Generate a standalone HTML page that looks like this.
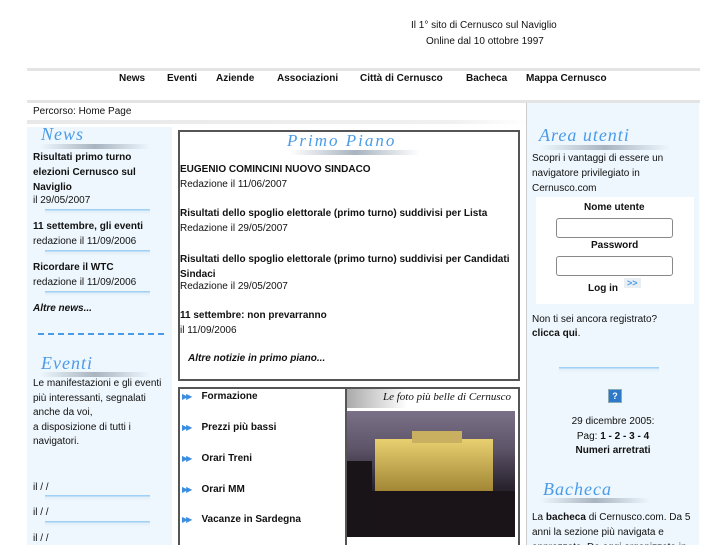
<!DOCTYPE html>
<html><head><meta charset="utf-8"><style>
*{margin:0;padding:0;box-sizing:border-box}
html,body{width:727px;height:545px;overflow:hidden}
body{background:#fff;font-family:"Liberation Sans",sans-serif;font-size:10px;color:#111;position:relative}
.a{position:absolute;white-space:nowrap}
b{font-weight:bold}
.t{position:absolute;font-family:"Liberation Serif",serif;font-style:italic;color:#4a9be8;font-size:18px;letter-spacing:1px}
.sep{position:absolute;height:6px;background:linear-gradient(#9fd0f5 0,#9fd0f5 1px,#e2eef8 2px,rgba(255,255,255,0) 6px)}
.ul{position:absolute;height:5px;background:linear-gradient(90deg,rgba(180,190,200,0),#a8b4c0 50%,rgba(180,190,200,0))}
.arr{color:#3a8de0;font-size:8px;letter-spacing:-2px}
</style></head><body>
<div class="a" style="left:411px;top:20px">Il 1° sito di Cernusco sul Naviglio</div>
<div class="a" style="left:426px;top:36px">Online dal 10 ottobre 1997</div>
<div class="a" style="left:27px;top:68px;width:673px;height:3px;background:#e4e4e4"></div>
<div class="a" style="left:119px;top:73px;font-weight:bold">News</div>
<div class="a" style="left:167px;top:73px;font-weight:bold">Eventi</div>
<div class="a" style="left:216px;top:73px;font-weight:bold">Aziende</div>
<div class="a" style="left:277px;top:73px;font-weight:bold">Associazioni</div>
<div class="a" style="left:360px;top:73px;font-weight:bold">Città di Cernusco</div>
<div class="a" style="left:466px;top:73px;font-weight:bold">Bacheca</div>
<div class="a" style="left:526px;top:73px;font-weight:bold">Mappa Cernusco</div>
<div class="a" style="left:27px;top:100px;width:673px;height:3px;background:#e4e4e4"></div>
<div class="a" style="left:33px;top:106px">Percorso: Home Page</div>
<div class="a" style="left:27px;top:120px;width:500px;height:4px;background:linear-gradient(90deg,#e8e8e8,#f0f0f0 85%,#fff)"></div>

<div class="a" style="left:27px;top:127px;width:145px;height:418px;background:#eef7fd"></div>
<div class="t" style="left:41px;top:124px">News</div><div class="ul" style="left:40px;top:144px;width:110px"></div>
<div class="a" style="left:33px;top:150px;line-height:15px;font-weight:bold">Risultati primo turno<br>elezioni Cernusco sul<br>Naviglio</div>
<div class="a" style="left:33px;top:195px">il 29/05/2007</div>
<div class="sep" style="left:45px;top:209px;width:105px"></div>
<div class="a" style="left:33px;top:221px;font-weight:bold">11 settembre, gli eventi</div>
<div class="a" style="left:33px;top:236px">redazione il 11/09/2006</div>
<div class="sep" style="left:45px;top:250px;width:105px"></div>
<div class="a" style="left:33px;top:262px;font-weight:bold">Ricordare il WTC</div>
<div class="a" style="left:33px;top:277px">redazione il 11/09/2006</div>
<div class="sep" style="left:45px;top:291px;width:105px"></div>
<div class="a" style="left:33px;top:303px;font-weight:bold;font-style:italic">Altre news...</div>
<div class="a" style="left:38px;top:333px;width:126px;border-top:2px dashed #4a9be8;height:2px"></div>
<div class="t" style="left:41px;top:353px">Eventi</div><div class="ul" style="left:40px;top:372px;width:110px"></div>
<div class="a" style="left:33px;top:377px;line-height:14.6px">Le manifestazioni e gli eventi<br>più interessanti, segnalati<br>anche da voi,<br>a disposizione di tutti i<br>navigatori.</div>
<div class="a" style="left:33px;top:482px">il / /</div>
<div class="sep" style="left:45px;top:495px;width:105px"></div>
<div class="a" style="left:33px;top:507px">il / /</div>
<div class="sep" style="left:45px;top:521px;width:105px"></div>
<div class="a" style="left:33px;top:533px">il / /</div>

<div class="a" style="left:178px;top:130px;width:342px;height:251px;border:2px solid #555"></div>
<div class="a" style="left:287px;top:131px;font-family:'Liberation Serif',serif;font-style:italic;color:#4a9be8;font-size:17px;letter-spacing:2px">Primo Piano</div>
<div class="ul" style="left:290px;top:150px;width:130px"></div>
<div class="a" style="left:180px;top:164px;font-weight:bold">EUGENIO COMINCINI NUOVO SINDACO</div>
<div class="a" style="left:180px;top:179px">Redazione il 11/06/2007</div>
<div class="a" style="left:180px;top:208px;font-weight:bold">Risultati dello spoglio elettorale (primo turno) suddivisi per Lista</div>
<div class="a" style="left:180px;top:223px">Redazione il 29/05/2007</div>
<div class="a" style="left:180px;top:252px;font-weight:bold;line-height:15px">Risultati dello spoglio elettorale (primo turno) suddivisi per Candidati<br>Sindaci</div>
<div class="a" style="left:180px;top:281px">Redazione il 29/05/2007</div>
<div class="a" style="left:180px;top:310px;font-weight:bold">11 settembre: non prevarranno</div>
<div class="a" style="left:180px;top:325px">il 11/09/2006</div>
<div class="a" style="left:188px;top:353px;font-weight:bold;font-style:italic">Altre notizie in primo piano...</div>

<div class="a" style="left:178px;top:387px;width:342px;height:170px;border:2px solid #555"></div>
<div class="a" style="left:345px;top:387px;width:2px;height:160px;background:#555"></div>
<div class="a" style="left:182px;top:391px"><span class="arr">▶▶</span>&nbsp;&nbsp;&nbsp;&nbsp;<b>Formazione</b></div>
<div class="a" style="left:182px;top:422px"><span class="arr">▶▶</span>&nbsp;&nbsp;&nbsp;&nbsp;<b>Prezzi più bassi</b></div>
<div class="a" style="left:182px;top:453px"><span class="arr">▶▶</span>&nbsp;&nbsp;&nbsp;&nbsp;<b>Orari Treni</b></div>
<div class="a" style="left:182px;top:484px"><span class="arr">▶▶</span>&nbsp;&nbsp;&nbsp;&nbsp;<b>Orari MM</b></div>
<div class="a" style="left:182px;top:514px"><span class="arr">▶▶</span>&nbsp;&nbsp;&nbsp;&nbsp;<b>Vacanze in Sardegna</b></div>
<div class="a" style="left:347px;top:389px;width:60px;height:19px;background:linear-gradient(90deg,#aaa,#ddd 60%,#fff)"></div>
<div class="a" style="left:383px;top:391px;font-family:'Liberation Serif',serif;font-style:italic;font-size:11px">Le foto più belle di Cernusco</div>
<div class="a" style="left:347px;top:411px;width:168px;height:126px;background:linear-gradient(#7a7188 0,#5d5468 30%,#2a2430 60%,#141016 100%);overflow:hidden">
 <div style="position:absolute;left:28px;top:28px;width:118px;height:58px;background:linear-gradient(#e8d070,#9a7e30)"></div>
 <div style="position:absolute;left:65px;top:20px;width:50px;height:12px;background:#c8b060"></div>
 <div style="position:absolute;left:0;top:80px;width:168px;height:46px;background:#1a1418"></div>
 <div style="position:absolute;left:0;top:50px;width:25px;height:76px;background:#181418"></div>
</div>

<div class="a" style="left:526px;top:103px;width:1px;height:442px;background:#ccc"></div>
<div class="a" style="left:527px;top:103px;width:172px;height:442px;background:#eef7fd"></div>
<div class="t" style="left:539px;top:125px">Area utenti</div><div class="ul" style="left:540px;top:145px;width:130px"></div>
<div class="a" style="left:532px;top:151px;line-height:15px">Scopri i vantaggi di essere un<br>navigatore privilegiato in<br>Cernusco.com</div>
<div class="a" style="left:536px;top:197px;width:158px;height:107px;background:#fff"></div>
<div class="a" style="left:584px;top:202px;font-weight:bold">Nome utente</div>
<div class="a" style="left:556px;top:218px;width:117px;height:20px;border:1px solid #888;border-radius:3px;background:#fff"></div>
<div class="a" style="left:591px;top:240px;font-weight:bold">Password</div>
<div class="a" style="left:556px;top:256px;width:117px;height:20px;border:1px solid #888;border-radius:3px;background:#fff"></div>
<div class="a" style="left:588px;top:283px;font-weight:bold">Log in</div>
<div class="a" style="left:624px;top:278px;color:#4a9be8;font-size:9px;font-weight:bold;background:#e8eef2;padding:0 3px">&gt;&gt;</div>
<div class="a" style="left:532px;top:314px">Non ti sei ancora registrato?</div>
<div class="a" style="left:532px;top:328px"><b>clicca qui</b>.</div>
<div class="sep" style="left:559px;top:367px;width:100px"></div>
<div class="a" style="left:608px;top:389px;width:14px;height:14px;background:#2d78c8;border:1px solid #8ab;color:#fff;font-size:9px;font-weight:bold;text-align:center;line-height:12px">?</div>
<div class="a" style="left:527px;top:415px;width:172px;text-align:center;line-height:14.5px">29 dicembre 2005:<br>Pag: <b>1 - 2 - 3 - 4</b><br><b>Numeri arretrati</b></div>
<div class="t" style="left:543px;top:479px">Bacheca</div><div class="ul" style="left:540px;top:498px;width:110px"></div>
<div class="a" style="left:532px;top:510px;line-height:15px">La <b>bacheca</b> di Cernusco.com. Da 5<br>anni la sezione più navigata e<br>apprezzata. Da oggi organizzata in</div>
</body></html>
